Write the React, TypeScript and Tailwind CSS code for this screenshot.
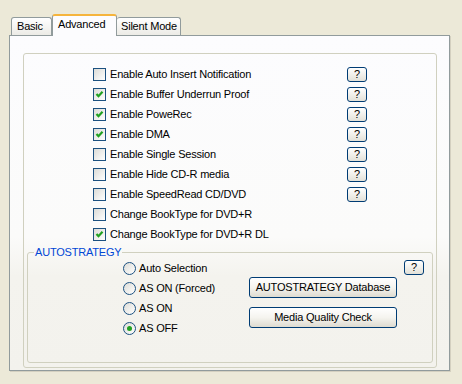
import React from "react";

const options = [
  { label: "Enable Auto Insert Notification", checked: false, help: true },
  { label: "Enable Buffer Underrun Proof", checked: true, help: true },
  { label: "Enable PoweRec", checked: true, help: true },
  { label: "Enable DMA", checked: true, help: true },
  { label: "Enable Single Session", checked: false, help: true },
  { label: "Enable Hide CD-R media", checked: false, help: true },
  { label: "Enable SpeedRead CD/DVD", checked: false, help: true },
  { label: "Change BookType for DVD+R", checked: false, help: false },
  { label: "Change BookType for DVD+R DL", checked: true, help: false },
];

const strategies = ["Auto Selection", "AS ON (Forced)", "AS ON", "AS OFF"];

function CheckBox({ checked }: { checked: boolean }) {
  return (
    <div className="w-[13px] h-[13px] shrink-0 border border-[#1C5180] bg-gradient-to-br from-[#DCDCD7] to-white flex items-center justify-center">
      {checked && (
        <svg width="11" height="11" viewBox="0 0 11 11">
          <path d="M2.5 5 L4.5 7.2 L8.5 2.8" fill="none" stroke="#21A121" strokeWidth="2.2" />
        </svg>
      )}
    </div>
  );
}

function Radio({ checked }: { checked: boolean }) {
  return (
    <div className="w-[13px] h-[13px] shrink-0 rounded-full border border-[#1C5180] bg-gradient-to-br from-[#DCDCD7] to-white flex items-center justify-center">
      {checked && <div className="w-[5px] h-[5px] rounded-full bg-[#21A121]" />}
    </div>
  );
}

function HelpButton() {
  return (
    <button className="w-[20px] h-[15px] shrink-0 rounded-[3px] border border-[#003C74] bg-gradient-to-b from-white to-[#E3E1D8] flex items-center justify-center leading-none text-[11px]">
      ?
    </button>
  );
}

function XpButton({ children }: { children: React.ReactNode }) {
  return (
    <button className="w-[148px] h-[21px] rounded-[3px] border border-[#003C74] bg-gradient-to-b from-white via-[#F5F4EF] to-[#DEDBD0] flex items-center justify-center text-[11px] tracking-[-0.2px]">
      {children}
    </button>
  );
}

export default function App() {
  return (
    <div className="w-[462px] h-[384px] bg-[#ECE9D8] text-black text-[11px] tracking-[-0.2px] font-['Liberation_Sans',Arial,sans-serif]">
      {/* Tabs */}
      <div className="h-[35px] pl-[11px] flex items-end">
        <div className="w-[41px] h-[18px] rounded-t-[3px] border border-b-0 border-[#919B9C] bg-gradient-to-b from-white to-[#ECEBE6] pl-[5px] flex items-center">
          Basic
        </div>
        <div className="relative z-10 w-[65px] h-[22px] -mb-[1px] rounded-t-[3px] border border-b-0 border-[#919B9C] border-t-2 border-t-[#F5B43C] bg-[#FCFCFE] pl-[5px] pb-[3px] flex items-center">
          Advanced
        </div>
        <div className="w-[64px] h-[18px] rounded-t-[3px] border border-b-0 border-l-0 border-[#919B9C] bg-gradient-to-b from-white to-[#ECEBE6] pl-[4px] flex items-center">
          Silent Mode
        </div>
      </div>

      {/* Panel */}
      <div className="ml-[9px] w-[441px] h-[336px] border border-[#919B9C] shadow-[1px_1px_0_#D4D0C0] bg-[linear-gradient(to_bottom,#FCFCFE_0%,#FBFBFA_60%,#F4F3EE_72%,#F3F2ED_100%)] pl-[13px] pt-[17px]">
        <div className="w-[414px] h-[315px] rounded-[3px] border border-[#D0D0BF] flex flex-col">
          <div className="pt-[10px] pl-[69px]">
            {options.map((o) => (
              <div key={o.label} className="h-[20px] flex items-center">
                <div className="w-[254px] flex items-center gap-[4px]">
                  <CheckBox checked={o.checked} />
                  <span className="whitespace-nowrap">{o.label}</span>
                </div>
                {o.help && <HelpButton />}
              </div>
            ))}
          </div>

          <fieldset className="mt-[3px] mx-[3px] rounded-[3px] border border-[#D0D0BF] pb-[24px]">
            <legend className="ml-[6px] px-[1px] leading-[10px] text-[#0046D5]">AUTOSTRATEGY</legend>
            <div className="flex pt-[1px]">
              <div className="pl-[95px] w-[221px]">
                {strategies.map((s, i) => (
                  <div key={s} className="h-[20px] flex items-center gap-[3px]">
                    <Radio checked={i === 3} />
                    <span className="whitespace-nowrap">{s}</span>
                  </div>
                ))}
              </div>
              <div className="pt-[19px] flex flex-col gap-[9px]">
                <XpButton>AUTOSTRATEGY Database</XpButton>
                <XpButton>Media Quality Check</XpButton>
              </div>
              <div className="ml-[7px] pt-[2px]">
                <HelpButton />
              </div>
            </div>
          </fieldset>
        </div>
      </div>
    </div>
  );
}
